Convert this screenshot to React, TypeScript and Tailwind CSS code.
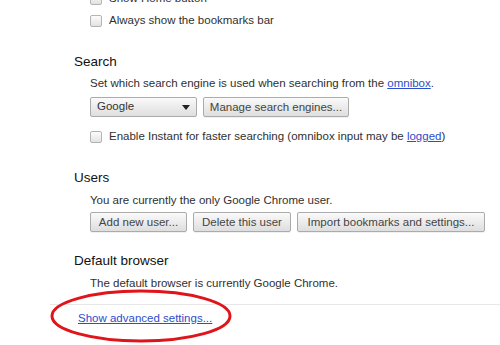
import React from "react";

const font = { fontFamily: '"Liberation Sans", Arial, sans-serif' };

function Checkbox() {
  return (
    <span className="inline-block w-[12px] h-[12px] shrink-0 rounded-[2px] border border-[#b4b4b4] bg-gradient-to-b from-[#fdfdfd] to-[#e2e2e2]" />
  );
}

function Btn({ children, w }: { children: React.ReactNode; w: string }) {
  return (
    <button
      className={`h-[20px] ${w} rounded-[2px] border border-[#ababab] bg-gradient-to-b from-[#fafafa] to-[#dedede] text-[11.5px] text-[#444] leading-[18px] flex items-center justify-center shadow-[0_1px_0_rgba(0,0,0,0.06)]`}
    >
      {children}
    </button>
  );
}

export default function App() {
  return (
    <div className="relative w-[500px] h-[345px] bg-white overflow-hidden text-[#303030]" style={font}>
      <div className="pl-[90px] mt-[-12px]">
        <div className="h-[21px] flex items-center gap-[7px] text-[11.5px]">
          <Checkbox />
          <span>Show Home button</span>
        </div>
        <div className="h-[24px] flex items-center gap-[7px] text-[11.5px]">
          <Checkbox />
          <span>Always show the bookmarks bar</span>
        </div>
      </div>

      <div className="pl-[74px] mt-[20px] text-[13.5px] leading-[18px] text-[#111]">Search</div>
      <div className="pl-[90px] mt-[4px] text-[11.5px] leading-[16px]">
        Set which search engine is used when searching from the{" "}
        <span className="text-[#2e4dc9] underline">omnibox</span>.
      </div>
      <div className="pl-[90px] mt-[6px] flex gap-[6px]">
        <div className="h-[20px] w-[107px] rounded-[2px] border border-[#ababab] bg-gradient-to-b from-[#fafafa] to-[#dedede] text-[11.5px] text-[#333] flex items-center justify-between pl-[6px] pr-[6px]">
          <span>Google</span>
          <svg width="8" height="5" viewBox="0 0 8 5">
            <path d="M0 0 L8 0 L4 5 Z" fill="#222" />
          </svg>
        </div>
        <Btn w="w-[146px]">Manage search engines...</Btn>
      </div>
      <div className="pl-[90px] mt-[8px] h-[24px] flex items-center gap-[7px] text-[11.5px]">
        <Checkbox />
        <span>
          Enable Instant for faster searching (omnibox input may be{" "}
          <span className="text-[#2e4dc9] underline">logged</span>)
        </span>
      </div>

      <div className="pl-[74px] mt-[20px] text-[13.5px] leading-[18px] text-[#111]">Users</div>
      <div className="pl-[90px] mt-[5px] text-[11.5px] leading-[16px]">
        You are currently the only Google Chrome user.
      </div>
      <div className="pl-[90px] mt-[4px] flex gap-[6px]">
        <Btn w="w-[97px]">Add new user...</Btn>
        <Btn w="w-[98px]">Delete this user</Btn>
        <Btn w="w-[188px]">Import bookmarks and settings...</Btn>
      </div>

      <div className="pl-[74px] mt-[20px] text-[13.5px] leading-[18px] text-[#111]">Default browser</div>
      <div className="pl-[90px] mt-[5px] text-[11.5px] leading-[16px]">
        The default browser is currently Google Chrome.
      </div>
      <div className="ml-[50px] mt-[13px] border-t border-[#e8e8e8]" />
      <div className="pl-[78px] mt-[5px] text-[11.5px] leading-[16px]">
        <span className="text-[#2e4dc9] underline">Show advanced settings...</span>
      </div>

      <svg className="absolute left-0 top-0 pointer-events-none" width="500" height="345">
        <ellipse cx="141" cy="316" rx="89" ry="25" fill="none" stroke="#e0141b" strokeWidth="3" />
      </svg>
    </div>
  );
}
